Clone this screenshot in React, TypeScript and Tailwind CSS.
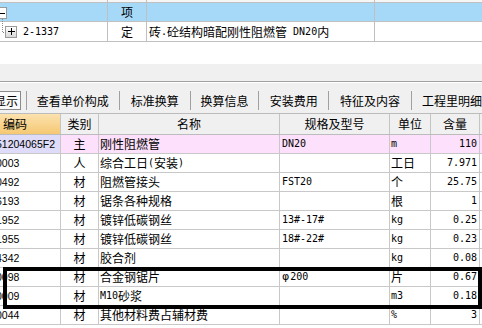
import React from "react";

function Mx({ t }: { t: string }) {
  const parts = t.split(/([\x20-\x7e]+)/);
  return (
    <>
      {parts.map((p, i) =>
        p === "" ? null : i % 2 === 1 ? (
          <span key={i} className="font-['DejaVu_Sans_Mono'] text-[10px] whitespace-pre">
            {p}
          </span>
        ) : (
          <span key={i}>{p}</span>
        )
      )}
    </>
  );
}

type Row = {
  code: string;
  type: string;
  name: string;
  spec: string;
  unit: string;
  qty: string;
  hl?: boolean;
};

const rows: Row[] = [
  { code: "51204065F2", type: "主", name: "刚性阻燃管", spec: "DN20", unit: "m", qty: "110", hl: true },
  { code: "0003", type: "人", name: "综合工日(安装)", spec: "", unit: "工日", qty: "7.971" },
  { code: "0492", type: "材", name: "阻燃管接头", spec: "FST20", unit: "个", qty: "25.75" },
  { code: "6193", type: "材", name: "锯条各种规格", spec: "", unit: "根", qty: "1" },
  { code: "1952", type: "材", name: "镀锌低碳钢丝", spec: "13#-17#", unit: "kg", qty: "0.25" },
  { code: "1955", type: "材", name: "镀锌低碳钢丝", spec: "18#-22#", unit: "kg", qty: "0.23" },
  { code: "4342", type: "材", name: "胶合剂", spec: "", unit: "kg", qty: "0.08" },
  { code: "0098", type: "材", name: "合金钢锯片", spec: "φ200", unit: "片", qty: "0.67" },
  { code: "0009", type: "材", name: "M10砂浆", spec: "", unit: "m3", qty: "0.18" },
  { code: "0044", type: "材", name: "其他材料费占辅材费", spec: "", unit: "%", qty: "3" },
];

const tabs = [
  { label: "查看单价构成", w: "w-[92px]" },
  { label: "标准换算", w: "w-[70px]" },
  { label: "换算信息", w: "w-[68px]" },
  { label: "安装费用", w: "w-[69px]" },
  { label: "特征及内容", w: "w-[82px]" },
];

export default function App() {
  return (
    <div className="relative w-[482px] h-[328px] overflow-hidden bg-white font-['Noto_Sans_CJK_SC',sans-serif] text-[12px] text-black leading-[18px]">
      {/* top tree grid */}
      <div className="flex h-[3px] border-b border-[#c0c0c0] bg-[#f6f6f6]">
        <div className="w-[108px] border-r border-[#c0c0c0]" />
        <div className="w-[39px] border-r border-[#c0c0c0]" />
        <div className="w-[228px] border-r border-[#c0c0c0]" />
        <div className="flex-1" />
      </div>
      <div className="flex h-[19px] border-b border-[#c0c0c0] bg-[#a6d8f7]">
        <div className="w-[108px] border-r border-[#c0c0c0] flex items-start pt-[4px] overflow-hidden">
          <div className="ml-[-5px] w-[12px] h-[12px] border border-[#9a9a9a] bg-white flex items-center justify-center">
            <div className="w-[6px] h-[1px] bg-black ml-[1px]" />
          </div>
        </div>
        <div className="w-[39px] border-r border-[#c0c0c0] flex items-center justify-center">项</div>
        <div className="w-[228px] border-r border-[#c0c0c0]" />
        <div className="flex-1" />
      </div>
      <div className="flex h-[20px] border-b border-[#c0c0c0]">
        <div className="w-[108px] border-r border-[#c0c0c0] flex items-center">
          <div className="ml-[5px] w-[12px] h-[12px] border border-[#9a9a9a] bg-gradient-to-b from-white to-[#d8d8d8] flex items-center justify-center relative">
            <div className="w-[7px] h-[1px] bg-black" />
            <div className="absolute w-[1px] h-[7px] bg-black" />
          </div>
          <span className="ml-[6px] font-['DejaVu_Sans_Mono'] text-[10px]">2-1337</span>
        </div>
        <div className="w-[39px] border-r border-[#c0c0c0] flex items-center justify-center">定</div>
        <div className="w-[228px] border-r border-[#c0c0c0] flex items-center pl-[2px] whitespace-nowrap overflow-hidden">
          <Mx t="砖.砼结构暗配刚性阻燃管 DN20内" />
        </div>
        <div className="flex-1" />
      </div>
      <svg className="absolute left-0 top-[19px]" width="8" height="16" viewBox="0 0 8 16">
        <path d="M2.5 0 V13.5 H5" stroke="#8a8a8a" strokeWidth="1" strokeDasharray="1 1" fill="none" />
      </svg>
      <div className="h-[22px] bg-white" />
      {/* gray area + tab bar */}
      <div className="h-[17px] bg-[#f0f0f0]" />
      <div className="h-[1px] bg-[#a0a0a0]" />
      <div className="h-[1px] bg-white" />
      <div className="h-[30px] bg-[#f0f0f0] pt-[8px] flex items-start whitespace-nowrap">
        <div className="w-[26px] flex">
          <div className="w-[21px] h-[19px] border border-[#8a8a8a] border-l-0 bg-[#fafafa] overflow-hidden flex items-center justify-end pr-[2px]">
            <span className="whitespace-nowrap">显示</span>
          </div>
        </div>
        {tabs.map((t) => (
          <React.Fragment key={t.label}>
            <div className="w-[1px] h-[19px] bg-[#a0a0a0]" />
            <div className={`${t.w} h-[19px] flex items-center justify-center`}>{t.label}</div>
          </React.Fragment>
        ))}
        <div className="w-[1px] h-[19px] bg-[#a0a0a0]" />
        <div className="h-[19px] flex items-center pl-[10px]">工程里明细</div>
      </div>
      {/* data grid header */}
      <div className="flex h-[22px] border-t border-b border-[#bcbcbc] bg-[#f0f0f0]">
        <div className="w-[61px] border-r border-[#c4c4c4] bg-gradient-to-b from-[#fce2ae] to-[#f5c872] flex items-center pl-[3px]">编码</div>
        <div className="w-[38px] border-r border-[#c4c4c4] flex items-center justify-center">类别</div>
        <div className="w-[181px] border-r border-[#c4c4c4] flex items-center justify-center">名称</div>
        <div className="w-[110px] border-r border-[#c4c4c4] flex items-center justify-center">规格及型号</div>
        <div className="w-[41px] border-r border-[#c4c4c4] flex items-center justify-center">单位</div>
        <div className="w-[49px] border-r border-[#c4c4c4] flex items-center justify-center">含量</div>
        <div className="flex-1" />
      </div>
      {rows.map((r, i) => (
        <div key={i} className={`flex h-[19px] border-b border-[#c8c8c8] ${r.hl ? "bg-[#fde0fb]" : "bg-white"}`}>
          <div className={`w-[61px] border-r border-[#c8c8c8] overflow-hidden flex items-center ${r.hl ? "bg-[#dedcf8]" : ""}`}>
            <span className="ml-[-4px] font-['Liberation_Sans'] text-[10.5px] whitespace-nowrap">{r.code}</span>
          </div>
          <div className="w-[38px] border-r border-[#c8c8c8] flex items-center justify-center">{r.type}</div>
          <div className="w-[181px] border-r border-[#c8c8c8] flex items-center pl-[1px] whitespace-nowrap overflow-hidden">
            <Mx t={r.name} />
          </div>
          <div className="w-[110px] border-r border-[#c8c8c8] flex items-center pl-[2px] whitespace-nowrap">
            {r.spec.startsWith("φ") ? (
              <>
                <span className="font-['DejaVu_Sans'] text-[11px] mr-[1px]">φ</span>
                <span className="font-['DejaVu_Sans_Mono'] text-[10px]">{r.spec.slice(1)}</span>
              </>
            ) : (
              <span className="font-['DejaVu_Sans_Mono'] text-[10px]">{r.spec}</span>
            )}
          </div>
          <div className="w-[41px] border-r border-[#c8c8c8] flex items-center pl-[1px] whitespace-nowrap">
            <Mx t={r.unit} />
          </div>
          <div className="w-[49px] border-r border-[#c8c8c8] flex items-center justify-end pr-[2px]">
            <span className="font-['DejaVu_Sans_Mono'] text-[10px]">{r.qty}</span>
          </div>
          <div className="flex-1" />
        </div>
      ))}
      {/* annotation box */}
      <div className="absolute left-[3px] top-[267px] w-[479px] h-[42px] border-[4px] border-black" />
    </div>
  );
}
